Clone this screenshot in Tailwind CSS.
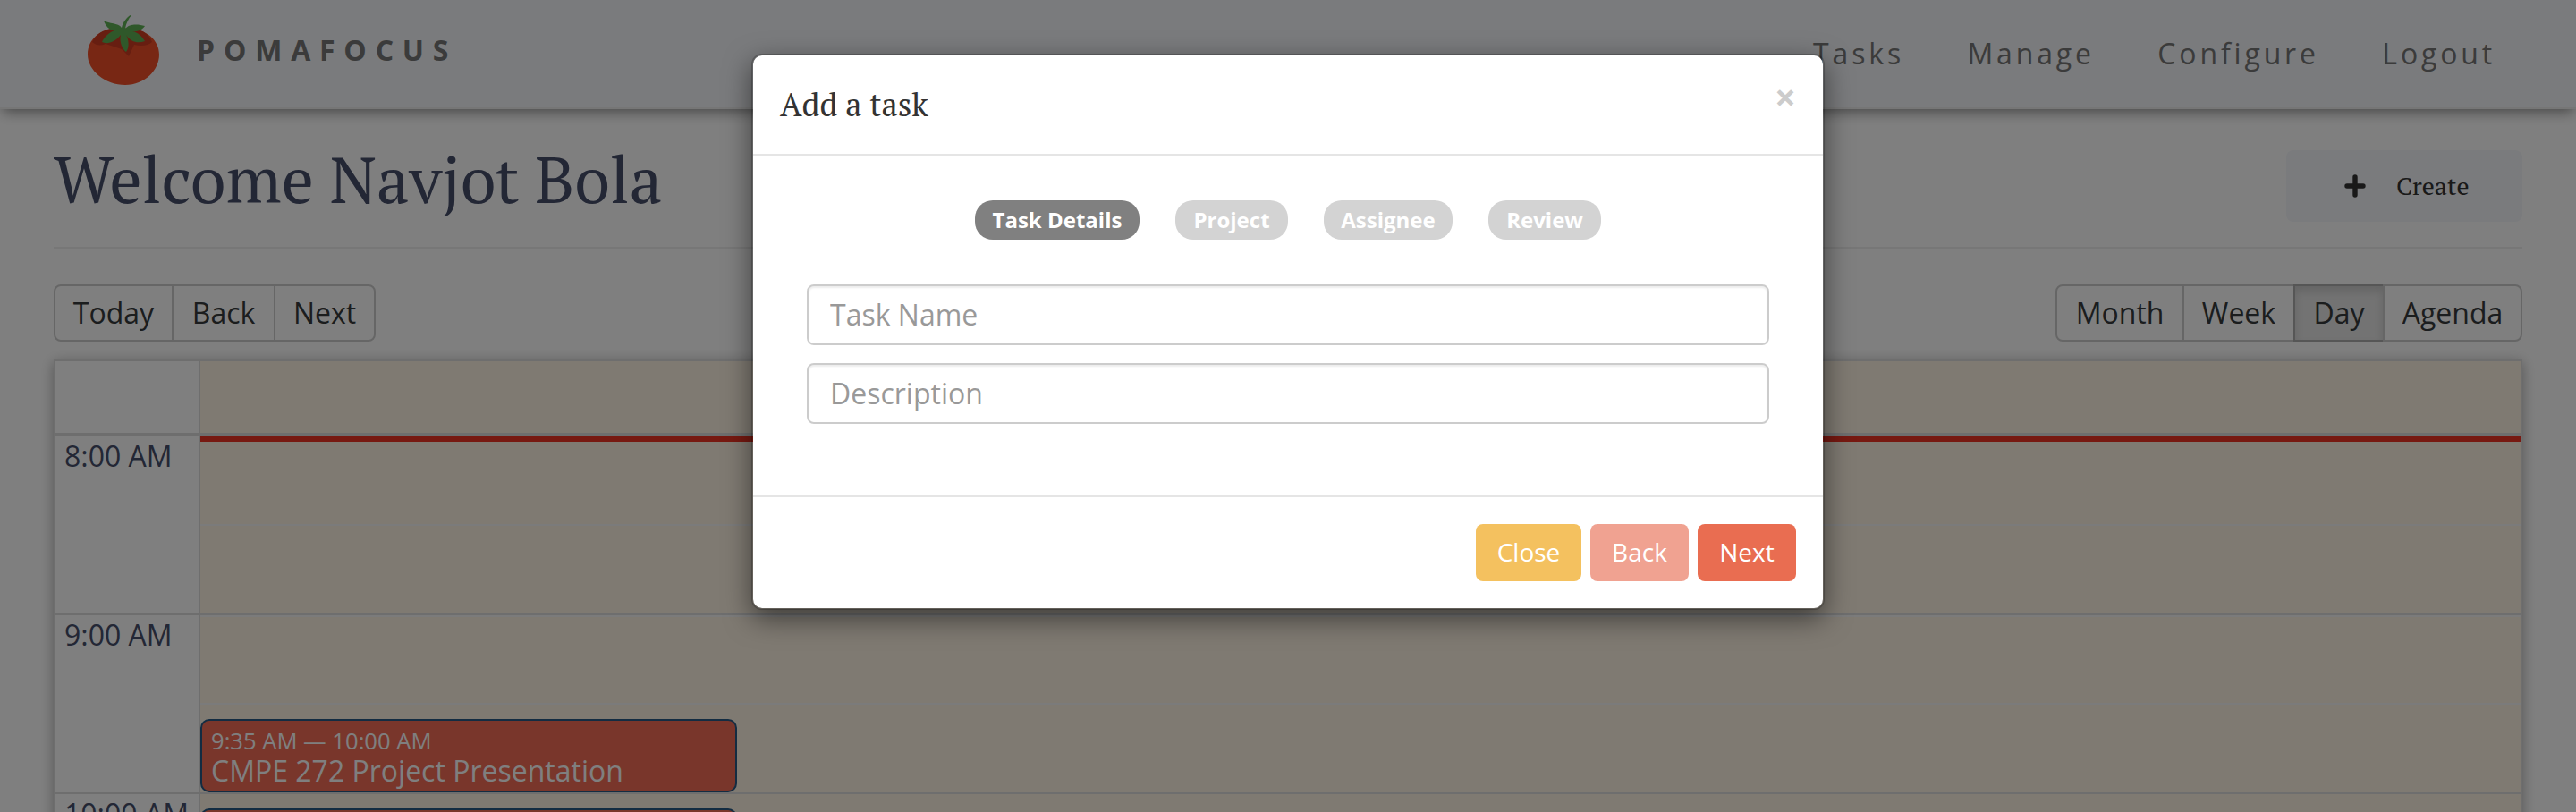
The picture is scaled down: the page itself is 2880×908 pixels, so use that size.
<!DOCTYPE html>
<html lang="en">
<head>
<meta charset="utf-8">
<title>Pomafocus</title>
<script src="https://cdn.jsdelivr.net/npm/@tailwindcss/browser@4"></script>
</head>
<body>
<div class="relative h-[908px] w-[2880px] overflow-hidden bg-white font-['Open_Sans',sans-serif] text-[32px] text-[#474f6b]">

<header class="relative flex h-[122px] items-center justify-between border-b-2 border-[#ececec] bg-[#f4f6fa] pl-[98px] pr-[90px] text-[#777] shadow-[0_6px_14px_-3px_rgba(0,0,0,0.45)]">
  <div class="flex items-center">
    <svg class="mb-[6px] h-[84px] w-[80px]" viewBox="0 0 80 84" aria-hidden="true">
      <path d="M40 18C18 15 0 26 0 46C0 64 20 80 42 80C64 80 80 63 80 46C80 28 62 15 40 18Z" fill="#f04f28"/>
      <path d="M5 32C12 18 26 15 40 17C54 15 68 20 72 32C68 36 60 37 52 35L46 48L38 40L20 34Q12 38 5 32Z" fill="#cf3c22"/>
      <path d="M49 2C46 1 39 10 38 16C34 10 24 12 18 8C20 14 24 19 30 19C24 21 18 27 16 32C22 35 31 32 37 24C35 32 39 40 43 43C47 38 46 29 43 24C48 32 56 34 64 31C61 26 56 21 50 20C58 21 62 17 64 14C57 12 47 11 42 17C43 11 45 7 49 2Z" fill="#5eb054"/>
    </svg>
    <span class="mb-[8px] ml-[42px] font-bold leading-none tracking-[9.8px]">POMAFOCUS</span>
  </div>
  <nav class="flex gap-[70.5px] leading-none tracking-[3.84px]">
    <a>Tasks</a><a>Manage</a><a>Configure</a><a>Logout</a>
  </nav>
</header>

<main class="px-[60px]">
  <div class="flex h-[156px] items-start justify-between border-b-2 border-[#eee] pt-[46px]">
    <h1 class="-mt-[12px] font-['PT_Serif','Liberation_Serif',serif] text-[72px] leading-[88px]">Welcome Navjot Bola</h1>
    <button class="flex h-[80px] w-[264px] items-center rounded-lg bg-[#f4f6fa] pl-[65px] text-[#333]">
      <svg class="h-[26px] w-[24px]" viewBox="0 0 24 26" aria-hidden="true"><path d="M12 3V23M3 13H21" stroke="#333" stroke-width="5.4" stroke-linecap="round"/></svg>
      <span class="ml-[34px] font-['PT_Serif','Liberation_Serif',serif] text-[28px]">Create</span>
    </button>
  </div>

  <div class="mt-[40px] flex h-16 justify-between text-[#373a3c]">
    <div class="flex">
      <button class="w-[134px] rounded-l-lg border-2 border-[#ccc]">Today</button>
      <button class="-ml-0.5 w-[116px] border-2 border-[#ccc]">Back</button>
      <button class="-ml-0.5 w-[114px] rounded-r-lg border-2 border-[#ccc]">Next</button>
    </div>
    <div class="flex">
      <button class="w-[144px] rounded-l-lg border-2 border-[#ccc]">Month</button>
      <button class="-ml-0.5 w-[126px] border-2 border-[#ccc]">Week</button>
      <button class="-ml-0.5 w-[102px] border-2 border-[#adadad] bg-[#e6e6e6] shadow-[inset_0_6px_10px_rgba(0,0,0,0.125)]">Day</button>
      <button class="-ml-0.5 w-[156px] rounded-r-lg border-2 border-[#ccc]">Agenda</button>
    </div>
  </div>

  <section class="mt-5 h-[600px] border-2 border-[#ddd] shadow-[0_3px_14px_rgba(0,0,0,0.33)]">
    <div class="flex h-[84px] border-b-4 border-[#ddd]">
      <div class="w-[162px] border-r-2 border-[#ddd]"></div>
      <div class="flex-1 bg-[#fff4e5]"></div>
    </div>
    <div class="flex">
      <div class="w-[162px] border-r-2 border-[#ddd]">
        <div class="h-[200px] border-b-2 border-[#ddd] pl-[10px] leading-[44px]">8:00 AM</div>
        <div class="h-[200px] border-b-2 border-[#ddd] pl-[10px] leading-[44px]">9:00 AM</div>
        <div class="h-[200px] whitespace-nowrap pl-[10px] leading-[44px]">10:00 AM</div>
      </div>
      <div class="relative flex-1 bg-[#fff4e5]">
        <div class="h-[200px] border-b-2 border-[#ddd]"><div class="h-[98px]"></div><div class="border-t-2 border-[#f7f7f7]"></div></div>
        <div class="h-[200px] border-b-2 border-[#ddd]"><div class="h-[98px] border-t-2 border-[#f7f7f7]"></div><div class="border-t-2 border-[#f7f7f7]"></div></div>
        <div class="absolute inset-x-0 top-0 h-1.5 bg-[#ee3322]"></div>
        <article class="absolute left-0 top-[316px] h-[82px] w-[600px] rounded-[10px] border-2 border-[#265985] bg-[#f26c56] pl-[10px] text-white">
          <div class="mt-[6px] text-[25.6px] leading-[34px]">9:35 AM — 10:00 AM</div>
          <div class="leading-[32px]">CMPE 272 Project Presentation</div>
        </article>
        <article class="absolute left-0 top-[416px] h-[82px] w-[600px] rounded-[10px] border-2 border-[#265985] bg-[#f26c56]"></article>
      </div>
    </div>
  </section>
</main>

<div class="absolute inset-0 bg-black/50"></div>

<div role="dialog" class="absolute left-[840px] top-[60px] flex h-[622px] w-[1200px] flex-col rounded-xl border-2 border-black/20 bg-white bg-clip-padding text-[#333] shadow-[0_10px_30px_rgba(0,0,0,0.5)]">
  <div class="flex h-[112px] justify-between border-b-2 border-[#e5e5e5] px-[30px]">
    <h4 class="mt-[30px] font-['PT_Serif','Liberation_Serif',serif] text-[36px] leading-[50px]">Add a task</h4>
    <button class="mt-[25px] h-[42px] text-[42px] font-bold leading-[42px] text-[#ccc]">×</button>
  </div>
  <div class="flex h-[382px] flex-col border-b-2 border-[#e5e5e5] px-[60px] pt-[50px]">
    <div class="flex justify-center gap-10 text-center text-2xl font-bold leading-[43px] text-white">
      <span class="h-11 w-[184px] rounded-[20px] bg-[#808080]">Task Details</span>
      <span class="h-11 w-[126px] rounded-[20px] bg-[#d3d3d3]">Project</span>
      <span class="h-11 w-[144px] rounded-[20px] bg-[#d3d3d3]">Assignee</span>
      <span class="h-11 w-[126px] rounded-[20px] bg-[#d3d3d3]">Review</span>
    </div>
    <input class="mt-[50px] h-[68px] rounded-lg border-2 border-[#ccc] px-6 pb-0.5 shadow-[inset_0_2px_2px_rgba(0,0,0,0.075)] placeholder:text-[#999]" placeholder="Task Name">
    <input class="mt-5 h-[68px] rounded-lg border-2 border-[#ccc] px-6 pb-0.5 shadow-[inset_0_2px_2px_rgba(0,0,0,0.075)] placeholder:text-[#999]" placeholder="Description">
  </div>
  <div class="flex justify-end gap-[10px] px-[30px] pt-[30px] text-[28px] text-white">
    <button class="h-16 w-[118px] rounded-lg bg-[#f4c15f] pb-0.5">Close</button>
    <button class="h-16 w-[110px] rounded-lg bg-[#f0a291] pb-0.5">Back</button>
    <button class="h-16 w-[110px] rounded-lg bg-[#e96d51] pb-0.5">Next</button>
  </div>
</div>
</div>
</body>
</html>
